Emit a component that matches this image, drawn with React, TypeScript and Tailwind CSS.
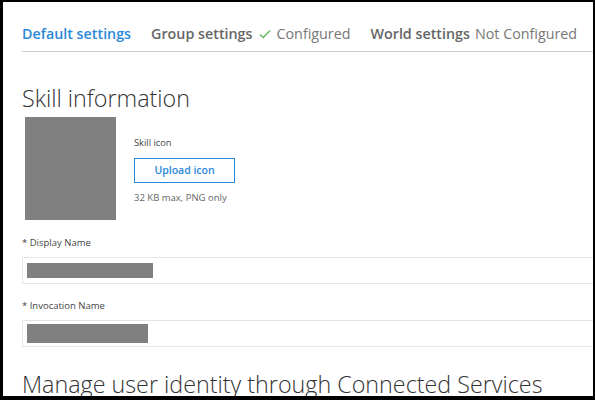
import React from "react";

export default function App() {
  return (
    <div className="w-[595px] h-[400px] bg-black pl-[3px] pt-[2px] pr-[2px] pb-[4px] overflow-hidden" style={{ fontFamily: '"Open Sans", "Noto Sans", sans-serif' }}>
      <div className="w-full h-full bg-white overflow-hidden pl-[19px]">
        {/* Tabs */}
        <div className="flex items-center pt-[22px] pb-[7px] border-b border-[#cccccc] text-[14.3px] leading-[20px] whitespace-nowrap">
          <span className="font-semibold text-[#2b88d8]">Default settings</span>
          <span className="ml-[20px] font-semibold text-[#666666]">Group settings</span>
          <svg className="ml-[6px]" width="12" height="10" viewBox="0 0 12 10">
            <path d="M1 5.5 L4.2 8.5 L11 1.5" fill="none" stroke="#5cb85c" strokeWidth="1.3" />
          </svg>
          <span className="ml-[6px] text-[#777777]">Configured</span>
          <span className="ml-[20px] font-semibold text-[#666666]">World settings</span>
          <span className="ml-[5px] text-[#777777]">Not Configured</span>
        </div>

        {/* Skill information */}
        <h2 className="mt-[31px] text-[23.3px] leading-[30px] font-light text-[#333333] whitespace-nowrap">Skill information</h2>

        <div className="flex mt-[4px]">
          <div className="ml-[3px] w-[91px] h-[103px] bg-[#808080]" />
          <div className="ml-[18px] pt-[19px] flex flex-col items-start">
            <span className="text-[9.3px] leading-[14px] text-[#444444]">Skill icon</span>
            <div className="mt-[8px] w-[101px] h-[25px] border border-[#2b88d8] flex items-center justify-center text-[10.5px] font-semibold text-[#2b88d8]">Upload icon</div>
            <span className="mt-[8px] text-[9.5px] leading-[14px] text-[#666666]">32 KB max, PNG only</span>
          </div>
        </div>

        {/* Display Name */}
        <div className="mt-[17px] text-[9.5px] leading-[12px] text-[#444444]">* Display Name</div>
        <div className="mt-[8px] w-[700px] h-[27px] border border-[#e5e5e5] pl-[4px] pt-[5px]">
          <div className="w-[126px] h-[15px] bg-[#808080]" />
        </div>

        <div className="mt-[16px] text-[9.5px] leading-[12px] text-[#444444]">* Invocation Name</div>
        <div className="mt-[8px] w-[700px] h-[27px] border border-[#e5e5e5] pl-[4px] pt-[3px]">
          <div className="w-[121px] h-[19px] bg-[#808080]" />
        </div>

        <h2 className="mt-[22px] text-[23.3px] leading-[30px] font-light text-[#333333] whitespace-nowrap">Manage user identity through Connected Services</h2>
      </div>
    </div>
  );
}
